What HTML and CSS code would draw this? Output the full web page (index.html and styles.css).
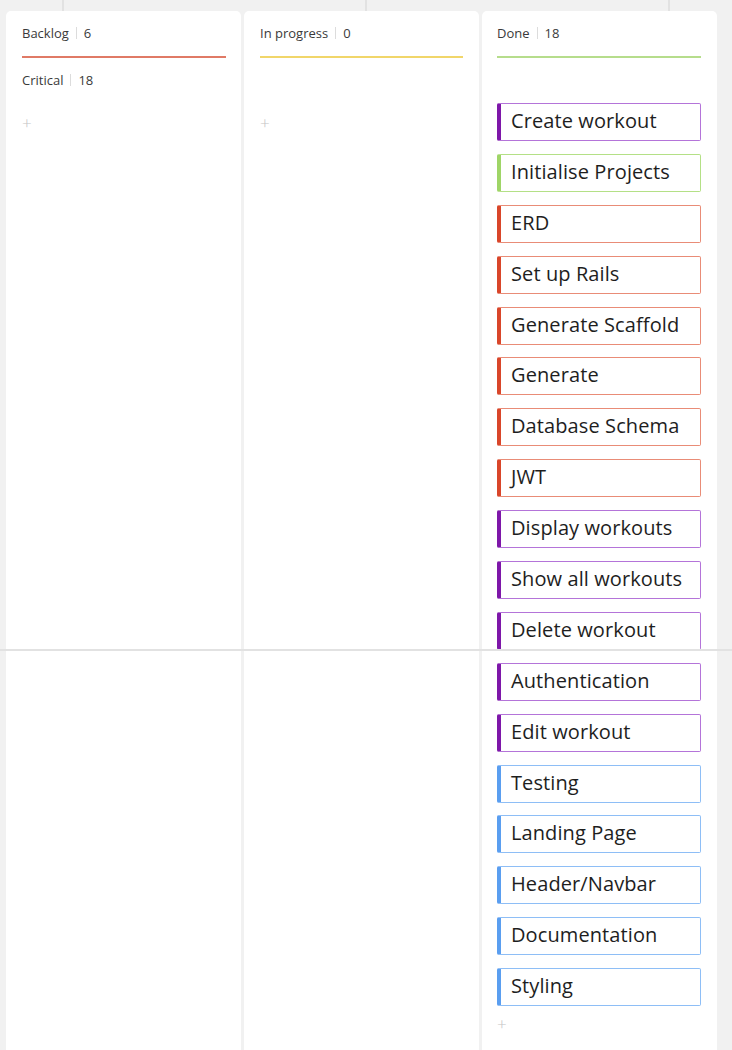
FILE: index.html
```html
<!DOCTYPE html>
<html lang="en">
<head>
<meta charset="utf-8">
<title>Board</title>
<link rel="stylesheet" href="styles.css">
</head>
<body>
<div class="board">
  <section class="column">
    <header class="col-head">
      <span class="col-title">Backlog</span><span class="sep"></span><span class="col-count">6</span>
    </header>
    <div class="col-line red"></div>
    <div class="lane-head"><span class="col-title">Critical</span><span class="sep"></span><span class="col-count">18</span></div>
    <div class="cards">
      <div class="add first">+</div>
    </div>
  </section>
  <section class="column">
    <header class="col-head">
      <span class="col-title">In progress</span><span class="sep"></span><span class="col-count">0</span>
    </header>
    <div class="col-line yellow"></div>
    <div class="lane-head"></div>
    <div class="cards">
      <div class="add first">+</div>
    </div>
  </section>
  <section class="column">
    <header class="col-head">
      <span class="col-title">Done</span><span class="sep"></span><span class="col-count">18</span>
    </header>
    <div class="col-line green"></div>
    <div class="lane-head"></div>
    <div class="cards">
      <div class="card purple">Create workout</div>
      <div class="card green">Initialise Projects</div>
      <div class="card red">ERD</div>
      <div class="card red">Set up Rails</div>
      <div class="card red">Generate Scaffold</div>
      <div class="card red">Generate</div>
      <div class="card red">Database Schema</div>
      <div class="card red">JWT</div>
      <div class="card purple">Display workouts</div>
      <div class="card purple">Show all workouts</div>
      <div class="card purple">Delete workout</div>
      <div class="card purple">Authentication</div>
      <div class="card purple">Edit workout</div>
      <div class="card blue">Testing</div>
      <div class="card blue">Landing Page</div>
      <div class="card blue">Header/Navbar</div>
      <div class="card blue">Documentation</div>
      <div class="card blue">Styling</div>
      <div class="add">+</div>
    </div>
  </section>
</div>
<div class="seam"></div>
</body>
</html>
```
FILE: styles.css
```css
html, body {
  margin: 0;
  padding: 0;
}
body {
  width: 732px;
  height: 1050px;
  overflow: hidden;
  position: relative;
  font-family: "Open Sans", "Noto Sans", sans-serif;
  background-color: #f1f1f1;
  background-image:
    linear-gradient(to right, transparent 62px, #e2e2e2 62px, #e2e2e2 64px, transparent 64px),
    linear-gradient(to bottom, transparent 384px, #e2e2e2 384px, #e2e2e2 386px, transparent 386px);
  background-size: 303px 100%, 100% 302px;
  background-position: 0 0, 0 -1px;
}
.board {
  display: flex;
  gap: 3px;
  padding: 11px 0 0 6px;
}
.column {
  width: 235px;
  box-sizing: border-box;
  height: 1039px;
  background: #fff;
  border-radius: 5px 5px 0 0;
  padding: 0 15px 0 16px;
}
.column:nth-child(2) {
  padding-left: 16px;
  padding-right: 16px;
}
.column:nth-child(3) {
  padding-left: 15px;
  padding-right: 16px;
}
.col-head, .lane-head {
  display: flex;
  align-items: center;
  font-size: 13px;
  color: #3a3a3a;
  height: 18px;
}
.col-head {
  margin-top: 13px;
}
.sep {
  display: inline-block;
  width: 1px;
  height: 12px;
  background: #dcdcdc;
  margin: 0 7px 0 7px;
}
.col-line {
  height: 2px;
  margin-top: 14px;
}
.col-line.red { background: #e07a66; }
.col-line.yellow { background: #f1d66a; }
.col-line.green { background: #b6dd8c; }
.lane-head {
  margin-top: 13px;
}
.cards {
  display: flex;
  flex-direction: column;
  gap: 12.9px;
  margin-top: 14px;
}
.card {
  height: 38px;
  box-sizing: border-box;
  border: 1px solid;
  border-left-width: 4px;
  border-radius: 2px;
  padding: 0 0 3px 10px;
  display: flex;
  align-items: center;
  font-size: 20px;
  color: #1e1e1e;
  letter-spacing: 0.1px;
}
.card.purple { border-color: #b474d9; border-left-color: #7e17a9; }
.card.green { border-color: #b4e086; border-left-color: #9fd567; }
.card.red { border-color: #e98c77; border-left-color: #d9462a; }
.card.blue { border-color: #8ebef6; border-left-color: #5a9ef0; }
.add {
  font-size: 17px;
  line-height: 12px;
  color: #c4c4c4;
  padding-left: 0;
  height: 12px;
  font-weight: 300;
}
.add.first {
  margin-top: 14px;
}
.cards .card + .add {
  margin-top: -1px;
}
.seam {
  position: absolute;
  left: 0;
  right: 0;
  top: 649px;
  height: 2px;
  background: #e2e2e2;
}
```
